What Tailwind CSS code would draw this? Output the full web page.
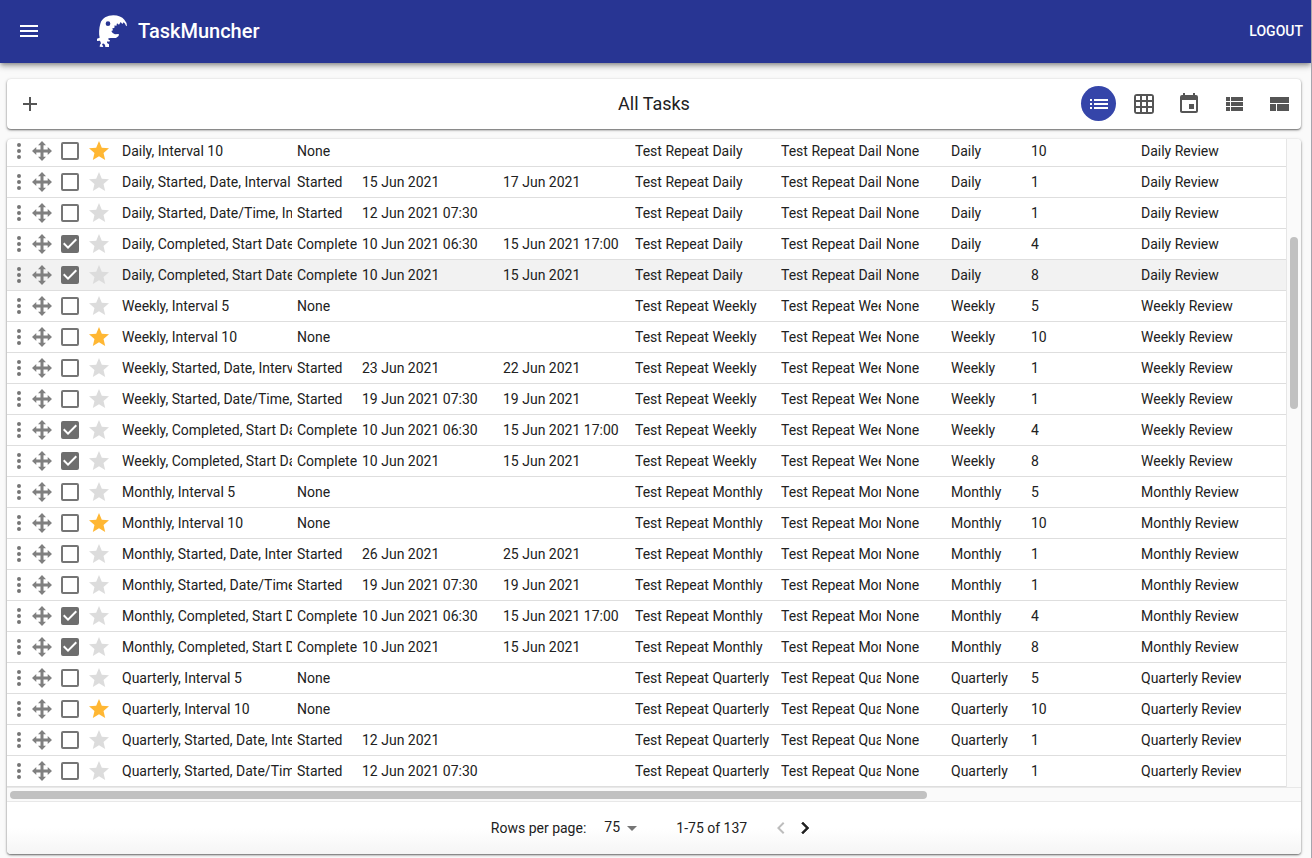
<!DOCTYPE html>
<html lang="en">
<head>
<meta charset="utf-8">
<meta name="viewport" content="width=device-width, initial-scale=1">
<title>TaskMuncher</title>
<script src="https://cdn.jsdelivr.net/npm/@tailwindcss/browser@4"></script>
</head>
<body class="min-h-screen overflow-x-hidden border-r border-[#a6a6ae] bg-[#fafafa] font-['Roboto',sans-serif] text-sm text-[#212121]">

<svg class="hidden" aria-hidden="true">
  <symbol id="more" viewBox="0 0 24 24"><path d="M12 8a2 2 0 1 0 0-4 2 2 0 0 0 0 4zm0 2a2 2 0 1 0 0 4 2 2 0 0 0 0-4zm0 6a2 2 0 1 0 0 4 2 2 0 0 0 0-4z"/></symbol>
  <symbol id="move" viewBox="0 0 20 20"><path d="M10 0l4 4.3h-2.500v4.200h4.200V6L20 10l-4.300 4v-2.500h-4.200v4.200H14L10 20l-4-4.300h2.500v-4.200H4.300V14L0 10l4.300-4v2.500h4.200V4.300H6z"/></symbol>
  <symbol id="star" viewBox="0 0 24 24"><path d="M12 17.270L18.180 21l-1.640-7.030L22 9.240l-7.190-.61L12 2 9.190 8.630 2 9.240l5.460 4.730L5.820 21z"/></symbol>
</svg>

<header class="relative flex h-[63px] items-center bg-[#283593] pr-2 pb-0.5 pl-[17px] text-white shadow-[0_2px_4px_-1px_rgba(0,0,0,0.3),0_4px_5px_rgba(0,0,0,0.16),0_1px_10px_rgba(0,0,0,0.14)]">
  <button type="button" aria-label="Menu"><svg class="size-6" viewBox="0 0 24 24" fill="currentColor"><path d="M3 18h18v-2H3v2zm0-5h18v-2H3v2zm0-7v2h18V6H3z"/></svg></button>
  <a href="#" class="ml-[55px] flex items-center gap-[10px]">
    <svg class="h-[33px] w-8" viewBox="288 41 96 99" fill="currentColor" aria-hidden="true"><path fill-rule="evenodd" d="M340 45C355 45 366 50 373 58Q381 66 381 78Q377 77 375 70L371 66L367 71L362 65L357 73L351 69L349 77L344 75L343 83L337 84L339 90L334 92Q337 100 345 102L356 101Q358 104 355 108L348 113L333 113L325 114L326 119L330 119L328 124L322 123L321 128L327 132L327 140L316 140L315 133L309 129L306 133L310 138L308 140L299 139L300 133L303 129L300 121L291 122L291 115L299 112C296 100 297 84 301 70C306 53 322 45 340 45zM324 63a7 7 0 1 0 0 14 7 7 0 0 0 0-14z"/></svg>
    <span class="text-xl font-medium">TaskMuncher</span>
  </a>
  <button type="button" class="ml-auto font-medium">LOGOUT</button>
</header>

<main class="pt-4 pr-[10px] pl-[7px]">
  <section class="grid h-[50px] grid-cols-[1fr_auto_1fr] items-center rounded bg-white px-[5px] pb-px text-[#555] shadow-[0_1px_2px_rgba(0,0,0,0.55),0_1px_4px_rgba(0,0,0,0.12)]">
    <button type="button" aria-label="Add task" class="ml-1.5 justify-self-start"><svg class="size-6" viewBox="0 0 24 24" fill="currentColor"><path d="M19 13h-6v6h-2v-6H5v-2h6V5h2v6h6v2z"/></svg></button>
    <h1 class="text-lg text-[#212121]">All Tasks</h1>
    <div class="flex gap-[10px] justify-self-end">
      <button type="button" aria-label="List view" class="flex size-[35px] items-center justify-center rounded-full bg-[#3545a9] text-white"><svg class="size-6" viewBox="0 0 24 24" fill="currentColor"><path d="M3 7h2v2H3zM3 11h2v2H3zM3 15h2v2H3zM7 7h14v2H7zM7 11h14v2H7zM7 15h14v2H7z"/></svg></button>
      <button type="button" aria-label="Grid view" class="flex size-[35px] items-center justify-center"><svg class="size-6" viewBox="0 0 24 24" fill="currentColor"><path fill-rule="evenodd" d="M5 2h14a3 3 0 0 1 3 3v14a3 3 0 0 1-3 3H5a3 3 0 0 1-3-3V5a3 3 0 0 1 3-3zM4 4v4h4V4zM10 4v4h4V4zM16 4v4h4V4zM4 10v4h4v-4zM10 10v4h4v-4zM16 10v4h4v-4zM4 16v4h4v-4zM10 16v4h4v-4zM16 16v4h4v-4z"/></svg></button>
      <button type="button" aria-label="Calendar view" class="flex size-[35px] items-center justify-center"><svg class="size-6" viewBox="0 0 24 24" fill="currentColor"><path d="M17 12h-5v5h5v-5zM16 1v2H8V1H6v2H5a2 2 0 0 0-2 2v14c0 1.100.9 2 2 2h14a2 2 0 0 0 2-2V5a2 2 0 0 0-2-2h-1V1h-2zm3 18H5V8h14v11z"/></svg></button>
      <button type="button" aria-label="Detail view" class="flex size-[35px] items-center justify-center"><svg class="size-6" viewBox="0 0 24 24" fill="currentColor"><path d="M4 5h4v4H4zM4 10h4v4H4zM4 15h4v4H4zM9 5h12v4H9zM9 10h12v4H9zM9 15h12v4H9z"/></svg></button>
      <button type="button" aria-label="Board view" class="flex size-[35px] items-center justify-center"><svg class="size-6" viewBox="0 0 24 24" fill="currentColor"><path d="M3 5h19v6H3zM3 12h6v7H3zM10 12h12v7H10z"/></svg></button>
    </div>
  </section>

  <section class="mt-[10px] overflow-hidden rounded bg-white shadow-[0_1px_2px_rgba(0,0,0,0.55),0_1px_4px_rgba(0,0,0,0.12)]">
    <div class="flex">
      <div class="min-w-0 flex-1 overflow-hidden">
        <table class="-mt-[3px] w-full table-fixed border-separate border-spacing-0 text-left" aria-label="All tasks">
          <colgroup>
            <col class="w-[23px]"><col class="w-[24px]"><col class="w-[31px]"><col class="w-[37px]">
            <col class="w-[175px]"><col class="w-[65px]"><col class="w-[141px]"><col class="w-[132px]">
            <col class="w-[146px]"><col class="w-[105px]"><col class="w-[65px]"><col class="w-[80px]">
            <col class="w-[110px]"><col>
          </colgroup>
          <tbody id="rows"></tbody>
        </table>
      </div>
      <div class="w-[15px] border-l border-[#e6e6e6] bg-[#fafafa] pt-[98px] pl-[3px]" aria-hidden="true"><div class="h-[172px] w-2 rounded-full bg-[#c1c1c1]"></div></div>
    </div>
    <div class="h-[15px] border-y border-[#e8e8e8] bg-[#fafafa] pt-[3px] pl-[3px]" aria-hidden="true"><div class="h-2 w-[71%] rounded-full bg-[#c1c1c1]"></div></div>
    <footer class="flex h-[52px] items-center justify-center bg-linear-to-b from-white from-50% to-[#f5f5f5]">
      <label for="per-page">Rows per page:</label>
      <div class="relative ml-[18px] pb-0.5">
        <select id="per-page" class="w-9 appearance-none bg-transparent outline-none"><option>75</option><option>25</option><option>50</option></select>
        <svg class="pointer-events-none absolute top-0 -right-1 size-6 text-[#757575]" viewBox="0 0 24 24" fill="currentColor"><path d="M7 9l5 5 5-5z"/></svg>
      </div>
      <span class="ml-9">1-75 of 137</span>
      <button type="button" aria-label="Previous page" disabled class="ml-[22px] text-[#bdbdbd]"><svg class="size-6" viewBox="0 0 24 24" fill="currentColor"><path d="M15.410 7.410L14 6l-6 6 6 6 1.410-1.410L10.830 12z"/></svg></button>
      <button type="button" aria-label="Next page"><svg class="size-6" viewBox="0 0 24 24" fill="currentColor" stroke="currentColor" stroke-width=".6"><path d="M10 6L8.590 7.410 13.170 12l-4.580 4.590L10 18l6-6z"/></svg></button>
    </footer>
  </section>
</main>

<script>
// [title, status, start, due, repeat, interval, checked, starred]
const tasks = [
  ["Daily, Interval 10", "None", "", "", "Daily", 10, 0, 1],
  ["Daily, Started, Date, Interval 1", "Started", "15 Jun 2021", "17 Jun 2021", "Daily", 1, 0, 0],
  ["Daily, Started, Date/Time, Interval 1", "Started", "12 Jun 2021 07:30", "", "Daily", 1, 0, 0],
  ["Daily, Completed, Start Date/Time", "Completed", "10 Jun 2021 06:30", "15 Jun 2021 17:00", "Daily", 4, 1, 0],
  ["Daily, Completed, Start Date", "Completed", "10 Jun 2021", "15 Jun 2021", "Daily", 8, 1, 0],
  ["Weekly, Interval 5", "None", "", "", "Weekly", 5, 0, 0],
  ["Weekly, Interval 10", "None", "", "", "Weekly", 10, 0, 1],
  ["Weekly, Started, Date, Interval 1", "Started", "23 Jun 2021", "22 Jun 2021", "Weekly", 1, 0, 0],
  ["Weekly, Started, Date/Time, Interval 1", "Started", "19 Jun 2021 07:30", "19 Jun 2021", "Weekly", 1, 0, 0],
  ["Weekly, Completed, Start Date/Time", "Completed", "10 Jun 2021 06:30", "15 Jun 2021 17:00", "Weekly", 4, 1, 0],
  ["Weekly, Completed, Start Date", "Completed", "10 Jun 2021", "15 Jun 2021", "Weekly", 8, 1, 0],
  ["Monthly, Interval 5", "None", "", "", "Monthly", 5, 0, 0],
  ["Monthly, Interval 10", "None", "", "", "Monthly", 10, 0, 1],
  ["Monthly, Started, Date, Interval 1", "Started", "26 Jun 2021", "25 Jun 2021", "Monthly", 1, 0, 0],
  ["Monthly, Started, Date/Time, Interval 1", "Started", "19 Jun 2021 07:30", "19 Jun 2021", "Monthly", 1, 0, 0],
  ["Monthly, Completed, Start Date/Time", "Completed", "10 Jun 2021 06:30", "15 Jun 2021 17:00", "Monthly", 4, 1, 0],
  ["Monthly, Completed, Start Date", "Completed", "10 Jun 2021", "15 Jun 2021", "Monthly", 8, 1, 0],
  ["Quarterly, Interval 5", "None", "", "", "Quarterly", 5, 0, 0],
  ["Quarterly, Interval 10", "None", "", "", "Quarterly", 10, 0, 1],
  ["Quarterly, Started, Date, Interval 1", "Started", "12 Jun 2021", "", "Quarterly", 1, 0, 0],
  ["Quarterly, Started, Date/Time, Interval 1", "Started", "12 Jun 2021 07:30", "", "Quarterly", 1, 0, 0],
];
const activeRow = 4;
const cell = (text) => `<td class="p-0 pr-[5px]"><div class="overflow-hidden whitespace-nowrap">${text}</div></td>`;
document.getElementById("rows").innerHTML = tasks.map(([title, status, start, due, repeat, every, checked, starred], i) => `
  <tr class="h-[31px] *:border-b *:border-[#dedede] ${i === activeRow ? "bg-[#f2f2f2]" : ""}">
    <td class="p-0"><button type="button" aria-label="Task menu" class="block text-[#757575]"><svg class="size-6" fill="currentColor"><use href="#more"/></svg></button></td>
    <td class="p-0"><button type="button" aria-label="Move task" class="ml-[2px] block text-[#808080]"><svg class="size-5" fill="currentColor"><use href="#move"/></svg></button></td>
    <td class="p-0"><label class="ml-[7px] grid size-[18px]"><input type="checkbox" aria-label="${title}" class="peer col-start-1 row-start-1 size-[18px] appearance-none rounded-xs border-2 border-[#757575] checked:bg-[#6e6e6e] checked:border-[#6e6e6e]" ${checked ? "checked" : ""}><svg class="pointer-events-none invisible col-start-1 row-start-1 size-[18px] text-white peer-checked:visible" viewBox="3 3 18 18" fill="currentColor"><path d="M10 17l-5-5 1.410-1.410L10 14.170l7.590-7.590L19 8z"/></svg></label></td>
    <td class="p-0"><button type="button" aria-label="Star task" class="ml-[2px] block ${starred ? "text-[#ffb733]" : "text-[#dcdcdc]"}"><svg class="size-6" fill="currentColor"><use href="#star"/></svg></button></td>
    ${cell(title)}${cell(status)}${cell(start)}${cell(due)}${cell("Test Repeat " + repeat)}${cell("Test Repeat " + repeat)}${cell("None")}${cell(repeat)}${cell(every)}
    <td class="p-0"><div class="w-[100px] overflow-hidden whitespace-nowrap">${repeat} Review</div></td>
  </tr>`).join("");
</script>
</body>
</html>
